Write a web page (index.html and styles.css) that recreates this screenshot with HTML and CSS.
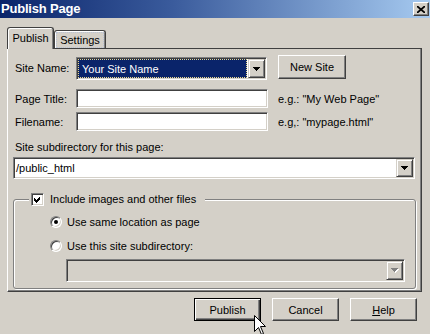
FILE: index.html
```html
<!DOCTYPE html>
<html lang="en">
<head>
<meta charset="utf-8">
<title>Publish Page</title>
<link rel="stylesheet" href="styles.css">
</head>
<body>
<div class="dialog">
  <div class="titlebar">
    <span class="title">Publish Page</span>
    <span class="close">
      <svg width="8" height="7" viewBox="0 0 8 7"><path d="M0 0 L8 7 M8 0 L0 7" stroke="#000" stroke-width="1.7"/></svg>
    </span>
  </div>

  <div class="tabs">
    <div class="tab active">Publish</div>
    <div class="tab"><span class="focus">Settings</span></div>
  </div>

  <div class="panel">
    <div class="row row-site">
      <span class="lbl">Site Name:</span>
      <div class="combo combo-site">
        <div class="value selected"><span>Your Site Name</span></div>
        <div class="drop"><svg width="7" height="4" viewBox="0 0 7 4"><polygon points="0,0 7,0 4,4 3,4" fill="#000"/></svg></div>
      </div>
      <div class="btn btn-new">New Site</div>
    </div>

    <div class="row row-title">
      <span class="lbl">Page Title:</span>
      <div class="field"></div>
      <span class="hint">e.g.: "My Web Page"</span>
    </div>

    <div class="row row-file">
      <span class="lbl">Filename:</span>
      <div class="field"></div>
      <span class="hint">e.g,: "mypage.html"</span>
    </div>

    <div class="sublabel">Site subdirectory for this page:</div>
    <div class="combo combo-dir">
      <div class="value">/public_html</div>
      <div class="drop"><svg width="7" height="4" viewBox="0 0 7 4"><polygon points="0,0 7,0 4,4 3,4" fill="#000"/></svg></div>
    </div>

    <fieldset class="group">
      <legend class="legend">
        <span class="check"><svg width="7" height="7" viewBox="0 0 7 7"><polygon points="0,2 2,4 6,0 6,3 2,7 0,5" fill="#000"/></svg></span>
        <span>Include images and other files</span>
      </legend>
      <div class="group-body">
        <div class="radio-row">
          <span class="radio"><span class="dot"></span></span>
          <span>Use same location as page</span>
        </div>
        <div class="radio-row second">
          <span class="radio"></span>
          <span>Use this site subdirectory:</span>
        </div>
        <div class="combo combo-disabled">
          <div class="value"></div>
          <div class="drop"><svg width="8" height="5" viewBox="0 0 8 5"><polygon points="1,1 8,1 5,5 4,5" fill="#fff"/><polygon points="0,0 7,0 4,4 3,4" fill="#808080"/></svg></div>
        </div>
      </div>
    </fieldset>
  </div>

  <div class="buttons">
    <div class="btn default">Publish</div>
    <div class="btn">Cancel</div>
    <div class="btn"><span class="u">H</span>elp</div>
  </div>
</div>

<svg class="cursor" width="13" height="20" viewBox="0 0 13 20">
  <path d="M0.5 0.5 L0.5 16.5 L4.5 12.5 L7.5 19.5 L9.5 18.5 L6.5 11.5 L11.5 11.5 Z" fill="#fff" stroke="#000" stroke-width="1" stroke-linejoin="miter"/>
</svg>
</body>
</html>
```

FILE: styles.css
```css
html, body {
  margin: 0;
  padding: 0;
}

body {
  width: 430px;
  height: 334px;
  overflow: hidden;
  position: relative;
  background: #d4d0c8;
  color: #000;
  font-family: "Liberation Sans", Arial, sans-serif;
  font-size: 11px;
}

.dialog {
  width: 430px;
  height: 334px;
}

/* title bar */
.titlebar {
  height: 18px;
  display: flex;
  align-items: center;
  justify-content: space-between;
  background: linear-gradient(to right, #0a246a 0%, #3a5b9c 40%, #a6caf0 100%);
}

.title {
  color: #fff;
  font-weight: bold;
  font-size: 13px;
  line-height: 18px;
  padding-left: 1px;
  letter-spacing: -0.2px;
}

.close {
  box-sizing: border-box;
  width: 16px;
  height: 14px;
  margin-right: 1px;
  background: #d4d0c8;
  border: 1px solid;
  border-color: #fff #404040 #404040 #fff;
  box-shadow: inset -1px -1px #808080;
  display: flex;
  align-items: center;
  justify-content: center;
}

.close svg {
  display: block;
}

/* tabs */
.tabs {
  display: flex;
  align-items: flex-end;
  height: 21px;
  margin-top: 9px;
  padding-left: 7px;
  position: relative;
  z-index: 1;
}

.tab {
  box-sizing: border-box;
  height: 18px;
  width: 52px;
  border: 1px solid #404040;
  border-bottom: none;
  border-radius: 3px 3px 0 0;
  box-shadow: inset 1px 1px #fff, inset -1px 0 #808080;
  background: #d4d0c8;
  display: flex;
  align-items: center;
  justify-content: center;
}

.tab.active {
  width: 47px;
  height: 22px;
  margin-bottom: -1px;
  padding-bottom: 1px;
}

.focus {
  padding: 0 2px;
  outline: 1px dotted #b9c3d6;
  outline-offset: 1px;
}

/* panel */
.panel {
  box-sizing: border-box;
  margin-left: 7px;
  width: 415px;
  height: 244px;
  border: 1px solid;
  border-color: #404040 #404040 #404040 #fff;
  box-shadow: inset -1px -1px #808080;
  padding: 8px 5px 0 5px;
}

.row {
  display: flex;
  align-items: center;
}

.lbl {
  width: 61px;
  padding-left: 2px;
  flex: none;
}

.row-site {
  align-items: flex-start;
  height: 23px;
}

.row-site .lbl {
  line-height: 23px;
}

.row-title {
  margin-top: 9px;
  height: 19px;
}

.row-file {
  margin-top: 4px;
  height: 19px;
}

.field {
  box-sizing: border-box;
  width: 192px;
  height: 19px;
  background: #fff;
  border: 1px solid;
  border-color: #808080 #fff #fff #808080;
  box-shadow: inset 1px 1px #404040, inset -1px -1px #d4d0c8;
}

.hint {
  margin-left: 10px;
}

.sublabel {
  margin-top: 10px;
  line-height: 13px;
  padding-left: 2px;
}

/* combo boxes */
.combo {
  box-sizing: border-box;
  display: flex;
  padding: 1px;
  background: #fff;
  border: 1px solid;
  border-color: #808080 #fff #fff #808080;
  box-shadow: inset 1px 1px #404040, inset -1px -1px #d4d0c8;
}

.combo .value {
  flex: 1;
  display: flex;
  align-items: center;
  white-space: nowrap;
}

.combo .drop {
  box-sizing: border-box;
  width: 17px;
  flex: none;
  background: #d4d0c8;
  border: 1px solid;
  border-color: #d4d0c8 #404040 #404040 #d4d0c8;
  box-shadow: inset 1px 1px #fff, inset -1px -1px #808080;
  display: flex;
  align-items: center;
  justify-content: center;
}

.drop svg {
  display: block;
  shape-rendering: crispEdges;
}

.combo-site {
  width: 191px;
  height: 23px;
}

.value.selected {
  margin-right: 1px;
  background: #0a246a;
  color: #fff;
  box-sizing: border-box;
  border: 1px dotted #e9d88e;
  padding-left: 3px;
}

.combo-dir {
  width: 402px;
  height: 22px;
  margin-top: 3px;
}

.combo-dir .value {
  padding-left: 1px;
}

/* buttons */
.btn {
  box-sizing: border-box;
  width: 67px;
  height: 23px;
  background: #d4d0c8;
  border: 1px solid;
  border-color: #fff #404040 #404040 #fff;
  box-shadow: inset -1px -1px #808080;
  display: flex;
  align-items: center;
  justify-content: center;
  flex: none;
}

.btn-new {
  width: 68px;
  height: 24px;
  margin-left: 11px;
  margin-top: -2px;
}

.btn.default {
  border-color: #000;
  box-shadow: inset 1px 1px #fff, inset -1px -1px #404040, inset -2px -2px #808080;
}

.u {
  text-decoration: underline;
}

.buttons {
  display: flex;
  justify-content: flex-end;
  gap: 11px;
  margin-top: 6px;
  padding-right: 13px;
}

/* group box */
.group {
  margin: 12px 0 0 0;
  padding: 0 0 6px 0;
  border: 1px solid #808080;
  border-radius: 3px;
  box-shadow: 1px 1px #fff, inset 1px 1px #fff;
}

.legend {
  margin-left: 15px;
  padding: 0 9px 0 2px;
  height: 16px;
  display: flex;
  align-items: center;
  background: #d4d0c8;
}

.group-body {
  padding: 8px 9px 0 36px;
}

.check {
  box-sizing: border-box;
  width: 13px;
  height: 13px;
  margin-right: 6px;
  background: #fff;
  border: 1px solid;
  border-color: #808080 #fff #fff #808080;
  box-shadow: inset 1px 1px #404040, inset -1px -1px #d4d0c8;
  display: flex;
  align-items: center;
  justify-content: center;
}

.check svg {
  display: block;
  shape-rendering: crispEdges;
}

.radio-row {
  display: flex;
  align-items: center;
  height: 14px;
}

.radio-row.second {
  margin-top: 10px;
}

.radio {
  box-sizing: border-box;
  width: 12px;
  height: 12px;
  margin-right: 5px;
  border-radius: 50%;
  background: #fff;
  border: 1px solid;
  border-color: #808080 #fff #fff #808080;
  box-shadow: inset 1px 1px #404040, inset -1px -1px #d4d0c8;
  display: flex;
  align-items: center;
  justify-content: center;
}

.dot {
  width: 4px;
  height: 4px;
  border-radius: 50%;
  background: #000;
}

.combo-disabled {
  width: 339px;
  height: 23px;
  margin-top: 6px;
  margin-left: 16px;
  background: #d4d0c8;
}

/* mouse pointer over the page */
.cursor {
  position: absolute;
  left: 254px;
  top: 315px;
}
```
